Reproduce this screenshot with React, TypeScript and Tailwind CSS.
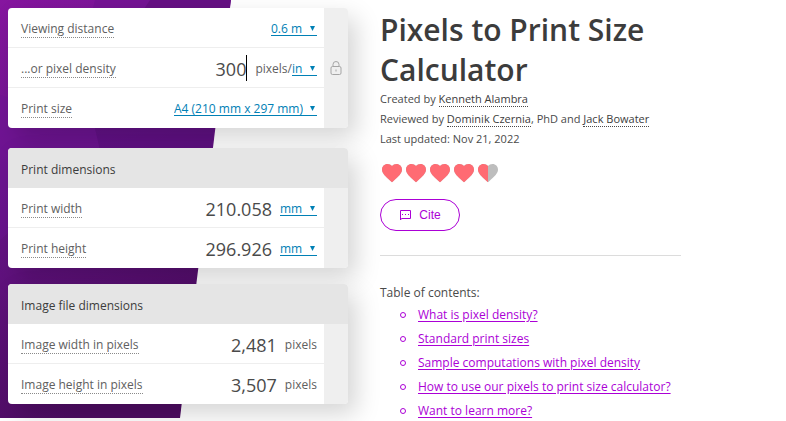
import React from 'react';
import { clsx } from 'clsx';

interface FieldRowProps {
  id: string;
  label: string;
  value?: string;
  prefix?: string;
  unit?: string;
  suffix?: string;
  active?: boolean;
}

const contents = [
  'What is pixel density?',
  'Standard print sizes',
  'Sample computations with pixel density',
  'How to use our pixels to print size calculator?',
  'Want to learn more?',
];

const HEART = 'M12 21.35l-1.45-1.32C5.4 15.36 2 12.28 2 8.5 2 5.42 4.42 3 7.5 3c1.74 0 3.41.81 4.5 2.09C13.09 3.81 14.76 3 16.5 3 19.58 3 22 5.42 22 8.5c0 3.78-3.4 6.86-8.55 11.54L12 21.35z';

export default function App() {
  return (
    <div className="relative isolate h-screen overflow-hidden bg-white font-['Open_Sans',sans-serif] text-[#4a4a4a]">
      <Backdrop />
      <div className="flex gap-8 pl-2 pt-2">
        <form className="w-[340px] shrink-0">
          <Card locked>
            <FieldRow id="distance" label="Viewing distance" unit="0.6 m" />
            <FieldRow id="density" label="...or pixel density" value="300" prefix="pixels/" unit="in" active />
            <FieldRow id="size" label="Print size" unit="A4 (210 mm x 297 mm)" />
          </Card>
          <Card title="Print dimensions" className="mt-5">
            <FieldRow id="print-width" label="Print width" value="210.058" unit="mm" />
            <FieldRow id="print-height" label="Print height" value="296.926" unit="mm" />
          </Card>
          <Card title="Image file dimensions" className="mt-4">
            <FieldRow id="image-width" label="Image width in pixels" value="2,481" suffix="pixels" />
            <FieldRow id="image-height" label="Image height in pixels" value="3,507" suffix="pixels" />
          </Card>
        </form>

        <main className="max-w-[301px] flex-1 pt-0.5">
          <h1 className="text-3xl/10 font-semibold text-[#3c3c3c]">Pixels to Print Size Calculator</h1>
          <div className="-mt-px text-[11px] leading-5">
            <p>Created by <Author name="Kenneth Alambra" /></p>
            <p className="whitespace-nowrap">
              Reviewed by <Author name="Dominik Czernia" />, PhD and <Author name="Jack Bowater" />
            </p>
            <p>Last updated: Nov 21, 2022</p>
          </div>
          <Rating />
          <button
            type="button"
            className="mt-3.5 flex h-8 w-20 items-center justify-center gap-2 rounded-2xl border border-[#ab00d6] font-['Liberation_Sans',sans-serif] text-xs text-[#ab00d6]"
          >
            <CiteIcon />
            Cite
          </button>
          <hr className="mt-6 border-[#dcdcdc]" />
          <nav className="mt-[27px] text-xs">
            <p className="leading-5">Table of contents:</p>
            <ul>
              {contents.map((item) => (
                <li key={item} className="flex h-6 items-center whitespace-nowrap text-[#ab00d6]">
                  <span className="ml-5 mr-3 size-[6px] rounded-full border border-[#ab00d6]" />
                  <a href="#" className="underline underline-offset-2">{item}</a>
                </li>
              ))}
            </ul>
          </nav>
        </main>
      </div>
    </div>
  );
}

function Backdrop() {
  return (
    <svg className="absolute left-0 top-0 -z-10" width="231" height="418" viewBox="0 0 231 418" aria-hidden="true">
      <defs>
        <linearGradient id="purple" x1="0" y1="0" x2="0.3" y2="1">
          <stop offset="0" stopColor="#86159f" />
          <stop offset="0.4" stopColor="#6a148c" />
          <stop offset="1" stopColor="#4d0c62" />
        </linearGradient>
      </defs>
      <path d="M0 0H231L180 418H0Z" fill="url(#purple)" />
      <path d="M95 0L92 12H142L150 0Z" fill="#6d1190" opacity="0.5" />
      <path d="M150 0H231L229 12H142Z" fill="#620f80" opacity="0.8" />
      <path d="M0 95L95 128L100 150L0 240Z" fill="#6f1496" opacity="0.4" />
      <path d="M95 128H214L211 150H100Z" fill="#5a0e80" opacity="0.5" />
    </svg>
  );
}

function Card({ title, locked, className, children }: any) {
  return (
    <section className={clsx('overflow-hidden rounded bg-white shadow-[8px_10px_24px_rgba(0,0,0,0.17)]', className)}>
      {title && <h2 className="flex h-10 items-center bg-[#e5e5e5] px-[13px] pt-1 text-xs text-[#3c3c3c]">{title}</h2>}
      <div className="flex">
        <div className="flex-1 divide-y divide-[#eeeeee]">{children}</div>
        <div className="flex w-6 items-center justify-center bg-[#efefef]">{locked && <LockIcon />}</div>
      </div>
    </section>
  );
}

function FieldRow({ id, label, value, prefix, unit, suffix, active }: FieldRowProps) {
  return (
    <div className="flex h-10 items-center justify-between pl-[13px] pr-[7px] text-xs text-[#606060]">
      <label htmlFor={id} className="whitespace-nowrap border-b border-dotted border-[#8a8a8a] pt-0.5 leading-[17px]">{label}</label>
      <div className="flex items-center">
        {value && (
          <input
            id={id}
            defaultValue={value}
            className={clsx(
              'h-[26px] w-20 bg-transparent pt-0.5 text-right text-lg text-[#4a4a4a] outline-none',
              active && 'border-r border-black',
            )}
          />
        )}
        {prefix && <span className="ml-2 pt-0.5">{prefix}</span>}
        {suffix && <span className="ml-2 pt-0.5">{suffix}</span>}
        {unit && (
          <span className={clsx('relative pt-0.5 text-[#0080b5]', value && !prefix && 'ml-2')}>
            <select
              id={value ? `${id}-unit` : id}
              aria-label={value ? `${label} unit` : undefined}
              className="block h-[18px] appearance-none bg-transparent pr-[14px] leading-[18px] outline-none"
            >
              <option>{unit}</option>
            </select>
            <span className="pointer-events-none absolute inset-x-0 bottom-0.5 border-b border-current" />
            <svg className="pointer-events-none absolute bottom-[7px] right-[2px]" width="5" height="5" viewBox="0 0 5 5" fill="currentColor">
              <path d="M0 0H5L2.5 5Z" />
            </svg>
          </span>
        )}
      </div>
    </div>
  );
}

function Author({ name }: { name: string }) {
  return <a href="#" className="border-b border-dotted border-[#4a4a4a] font-medium text-[#3c3c3c]">{name}</a>;
}

function Rating() {
  return (
    <div className="mt-3 flex" role="img" aria-label="4.5 out of 5">
      {[1, 1, 1, 1, 0.5].map((fill, i) => (
        <svg key={i} width="24" height="24" viewBox="0 0 24 24">
          <path d={HEART} fill="#bdbdbd" />
          <path d={HEART} fill="#ff6b73" clipPath={fill < 1 ? 'inset(0 50% 0 0)' : undefined} />
        </svg>
      ))}
    </div>
  );
}

function CiteIcon() {
  return (
    <svg width="12" height="12" viewBox="0 0 12 12" fill="none" stroke="currentColor">
      <path d="M1.5 11V1.5H11.5V9.5H2.5L1.5 11" />
      <path d="M3 5.5H4M6 5.5H7M9 5.5H10" />
    </svg>
  );
}

function LockIcon() {
  return (
    <svg width="12" height="14" viewBox="0 0 12 14" fill="none" stroke="#a5a5a5">
      <rect x="1" y="5.5" width="10" height="8" rx="1.5" />
      <path d="M3 5.5V3.5a3 3 0 0 1 6 0V5.5M6 8.5V10.5" />
    </svg>
  );
}
